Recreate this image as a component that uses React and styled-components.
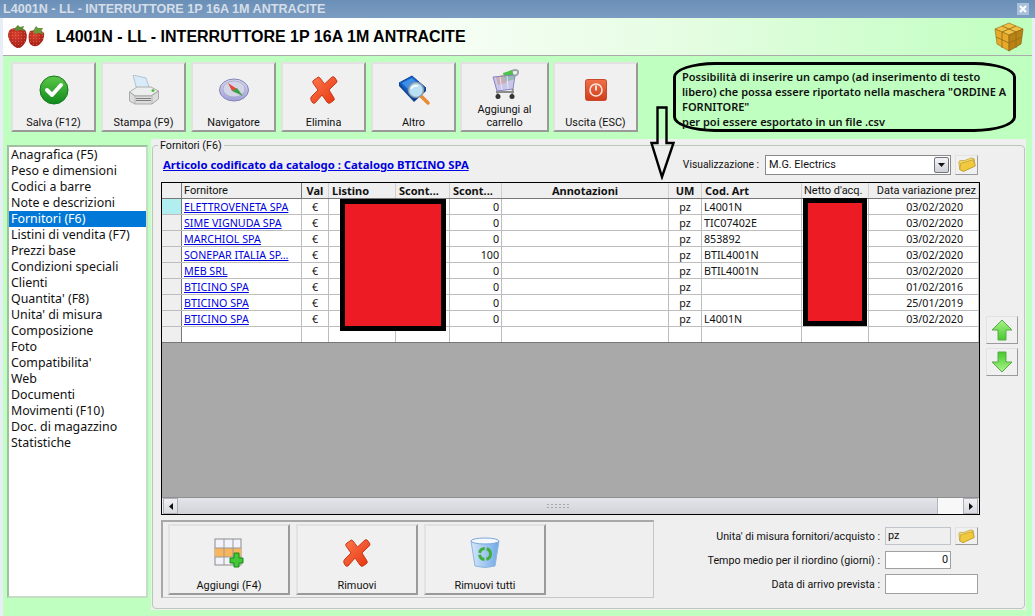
import React from "react";
import styled, { createGlobalStyle } from "styled-components";

const LIST_FONT = `"Noto Sans", "DejaVu Sans", sans-serif`;
const UI_FONT = `Roboto, "Noto Sans", sans-serif`;

const GlobalStyle = createGlobalStyle`
  html, body {
    margin: 0;
    padding: 0;
    background: #dfe9f3;
  }
  * {
    box-sizing: border-box;
  }
`;

const Frame = styled.div`
  position: relative;
  width: 1035px;
  height: 616px;
  overflow: hidden;
  padding: 0 3px;
  background: #e8eef5;
  font-family: ${UI_FONT};
  font-size: 10.9px;
  color: #111;
`;

const TitleBar = styled.div`
  display: flex;
  align-items: center;
  justify-content: space-between;
  height: 18px;
  margin: 0 -3px;
  padding: 0 6px 0 3px;
  background: linear-gradient(#6a8fb7, #7c9dc2);
  color: #d5dee8;
  font-family: "Liberation Sans", Arial, sans-serif;
  font-weight: bold;
  font-size: 12.6px;
`;

const CloseBox = styled.div`
  display: flex;
  align-items: center;
  justify-content: center;
  width: 12px;
  height: 12px;
  background: #a9c0da;
`;

const Header = styled.div`
  display: flex;
  align-items: center;
  height: 38px;
  padding: 0 8px 0 5px;
  background: linear-gradient(90deg, #fff 0%, #fff 30%, #e6fde3 65%, #bfffbf 100%);
  border-bottom: 1px solid #aaa;
`;

const HeaderTitle = styled.div`
  flex: 1;
  margin-left: 10px;
  font-family: "Liberation Sans", Arial, sans-serif;
  font-weight: bold;
  font-size: 16px;
  color: #000;
`;

const Content = styled.div`
  height: 560px;
  background: #bfffbf;
`;

const Toolbar = styled.div`
  display: flex;
  gap: 5px;
  height: 83px;
  padding: 6px 16px 0 8px;
`;

const ActionButton = styled.button`
  display: flex;
  flex-direction: column;
  flex: none;
  width: ${(p) => p.$w}px;
  height: ${(p) => p.$h || 70}px;
  margin: 0 0 0 ${(p) => (p.$tight ? -1 : 0)}px;
  padding: 0;
  background: #f0f0f0;
  border: 2px solid;
  border-color: #e2e2e2 #9a9a9a #9a9a9a #e2e2e2;
  font-family: ${UI_FONT};
  font-size: 10.9px;
  color: #111;
`;

const IconSlot = styled.span`
  flex: 1;
  display: flex;
  align-items: center;
  justify-content: center;
  min-height: 0;
`;

const ButtonLabel = styled.span`
  display: block;
  padding-bottom: 1px;
  line-height: 13px;
  text-align: center;
`;

const NoteBubble = styled.div`
  width: 343px;
  height: 70px;
  margin-left: auto;
  padding: 4px 0 0 6px;
  border: 3px solid #000;
  border-radius: 42px / 15px;
  font-family: ${LIST_FONT};
  font-weight: 600;
  font-size: 11px;
  line-height: 15px;
  color: #111;
  white-space: pre;
`;

const Body = styled.div`
  display: flex;
  gap: 3px;
  padding-left: 4px;
`;

const SideList = styled.ul`
  width: 141px;
  height: 453px;
  margin: 6px 0 0;
  padding: 0;
  list-style: none;
  background: #fff;
  border: 2px solid #a2bfa2;
  border-bottom-color: #c5dcc5;
  border-right-color: #c5dcc5;
  font-family: ${LIST_FONT};
  font-size: 12.4px;
`;

const SideItem = styled.li`
  height: 16px;
  padding-left: 2px;
  line-height: 16px;
  white-space: nowrap;
  background: ${(p) => (p.$active ? "#0078d7" : "transparent")};
  color: ${(p) => (p.$active ? "#fff" : "#111")};
`;

const Panel = styled.div`
  width: 875px;
  height: 471px;
  padding: 0 1px 1px;
  background: #efefef;
`;

const GroupBox = styled.fieldset`
  height: 470px;
  margin: 0;
  padding: 0 0 0 8px;
  border: 1px solid #b9c9b9;
  border-radius: 4px;
  min-width: 0;
`;

const GroupLegend = styled.legend`
  margin-left: -3px;
  padding: 0 2px;
  height: 13px;
  line-height: 13px;
  font-size: 10.7px;
`;

const TopRow = styled.div`
  display: flex;
  align-items: center;
  width: 817px;
  height: 30px;
  padding-bottom: 5px;
`;

const CatalogLink = styled.a`
  margin-left: 2px;
  font-family: ${LIST_FONT};
  color: #0000e0;
  font-weight: bold;
  font-size: 11.3px;
  text-decoration: underline;
`;

const ViewLabel = styled.span`
  margin-left: auto;
  margin-right: 6px;
  font-size: 10.3px;
`;

const Combo = styled.div`
  display: flex;
  align-items: center;
  justify-content: space-between;
  width: 186px;
  height: 20px;
  padding: 0 1px 0 3px;
  background: #fff;
  border: 1px solid #8a8a8a;
`;

const ComboArrow = styled.span`
  display: flex;
  align-items: center;
  justify-content: center;
  width: 15px;
  height: 16px;
  background: linear-gradient(#f4f4f8, #cfd0d8);
  border: 1px solid #70747c;
  border-radius: 2px;
`;

const FolderButton = styled.button`
  display: flex;
  align-items: center;
  justify-content: center;
  flex: none;
  width: 23px;
  height: ${(p) => p.$h || 20}px;
  margin: 0 0 0 4px;
  padding: 0;
  background: #f0f0f0;
  border: 1px solid;
  border-color: #e2e2e2 #9a9a9a #9a9a9a #e2e2e2;
`;

const MainRow = styled.div`
  display: flex;
  gap: 6px;
`;

const GridBox = styled.div`
  position: relative;
  display: flex;
  flex-direction: column;
  width: 819px;
  height: 333px;
  border: 1px solid #000;
  background: #a9a9a9;
  font-family: ${LIST_FONT};
  font-size: 10.7px;
`;

const COLUMNS = "20px 120px 27px 67px 54px 52px 167px 33px 100px 67px 110px";

const HeadRow = styled.div`
  display: grid;
  grid-template-columns: ${COLUMNS};
  height: 16px;
  background: #efefef;
  border-bottom: 1px solid #777;
`;

const HeadCell = styled.div`
  padding: 0 ${(p) => (p.$plain ? 2 : 3)}px;
  border-right: 1px solid ${(p) => (p.$dark ? "#777" : "#d0d0d0")};
  font-family: ${(p) => (p.$plain ? UI_FONT : LIST_FONT)};
  font-size: ${(p) => (p.$plain ? 11 : 11)}px;
  font-weight: ${(p) => (p.$plain ? "normal" : "bold")};
  text-align: ${(p) => p.$align || "left"};
  line-height: 15px;
  white-space: nowrap;
  overflow: hidden;
`;

const DataRow = styled.div`
  display: grid;
  grid-template-columns: ${COLUMNS};
  height: 16px;
  background: #fff;
  border-bottom: 1px solid ${(p) => (p.$last ? "#777" : "#bdbdbd")};
`;

const RowHead = styled.div`
  background: ${(p) => (p.$current ? "#b0eef0" : "#efefef")};
  border-right: 1px solid #777;
`;

const Cell = styled.div`
  padding: 0 ${(p) => p.$pr || 2}px 0 2px;
  border-right: 1px solid #bdbdbd;
  text-align: ${(p) => p.$align || "left"};
  line-height: 16px;
  white-space: nowrap;
  overflow: hidden;
`;

const SupplierLink = styled.a`
  color: #0000e0;
  text-decoration: underline;
`;

const GreyArea = styled.div`
  flex: 1;
  background: #a9a9a9;
`;

const Redaction = styled.div`
  position: absolute;
  left: ${(p) => p.$left}px;
  top: ${(p) => p.$top}px;
  width: ${(p) => p.$w}px;
  height: ${(p) => p.$h}px;
  background: #ed1c24;
  border: 5px solid #000;
`;

const ScrollBar = styled.div`
  display: flex;
  height: 17px;
  padding: 0 1px;
  background: #f0f0f0;
  border-top: 1px solid #8f8f8f;
`;

const ScrollButton = styled.div`
  display: flex;
  align-items: center;
  justify-content: center;
  flex: none;
  width: 15px;
  background: linear-gradient(#f0f0f4, #dadbe2);
  border: 1px solid #aeb0b8;
`;

const ScrollThumb = styled.div`
  flex: 1;
  display: flex;
  align-items: center;
  justify-content: center;
  background: linear-gradient(#e4e5ea, #d2d3da);
  border-right: 1px solid #b4b5bc;
`;

const ScrollGrip = styled.span`
  width: 23px;
  height: 6px;
  background-image: radial-gradient(#a5a6ae 0.8px, transparent 1px);
  background-size: 4px 3px;
`;

const ScrollRest = styled.div`
  width: 25px;
  background: #f8f8f8;
`;

const SideColumn = styled.div`
  display: flex;
  flex-direction: column;
  gap: 4px;
  padding-top: 134px;
`;

const MoveButton = styled.button`
  display: flex;
  align-items: center;
  justify-content: center;
  width: 32px;
  height: 28px;
  padding: 0;
  background: #f0f0f0;
  border: 1px solid;
  border-color: #e2e2e2 #9a9a9a #9a9a9a #e2e2e2;
`;

const BottomRow = styled.div`
  display: flex;
  width: 817px;
  margin-top: 5px;
`;

const ButtonGroup = styled.div`
  display: flex;
  gap: 6px;
  width: 493px;
  height: 78px;
  padding: 2px 0 0 5px;
  border: 1px solid #c6c6c6;
  border-top: 2px solid #a8a8a8;
  border-left: 2px solid #a8a8a8;
`;

const FieldBlock = styled.div`
  flex: 1;
  display: flex;
  flex-direction: column;
  padding-top: 7px;
`;

const FieldRow = styled.div`
  display: grid;
  grid-template-columns: 1fr 93px;
  align-items: center;
  gap: 5px;
  height: ${(p) => p.$h}px;
  margin-bottom: ${(p) => p.$mb || 0}px;
`;

const FieldLabel = styled.label`
  font-size: 10.7px;
  text-align: right;
  white-space: nowrap;
`;

const FieldControl = styled.div`
  display: flex;
`;

const TextBox = styled.div`
  width: ${(p) => p.$w}px;
  height: ${(p) => p.$h}px;
  padding: 0 2px;
  background: ${(p) => (p.$readOnly ? "#efefef" : "#fff")};
  border: 1px solid ${(p) => (p.$readOnly ? "#c0c4cc" : "#a0a0a0")};
  line-height: ${(p) => p.$h - 2}px;
  text-align: ${(p) => p.$align || "left"};
`;

const ArrowNote = styled.svg`
  position: absolute;
  left: 650px;
  top: 106px;
`;

/* icons */
const CheckIcon = () => (
  <svg width="30" height="30" viewBox="0 0 30 30">
    <defs>
      <linearGradient id="chk" x1="0" y1="0" x2="0" y2="1">
        <stop offset="0" stopColor="#5cc84a" />
        <stop offset="1" stopColor="#0e8a1a" />
      </linearGradient>
    </defs>
    <circle cx="15" cy="15" r="14" fill="url(#chk)" stroke="#16791e" />
    <path d="M8 15 L13 20 L22 10" fill="none" stroke="#fff" strokeWidth="4" strokeLinecap="round" strokeLinejoin="round" />
  </svg>
);

const PrinterIcon = () => (
  <svg width="30" height="30" viewBox="0 0 30 30">
    <path d="M4 0 L17 3 L21 15 L8 15 Z" fill="#d9ebf9" stroke="#a4b8c8" strokeWidth="0.8" />
    <path d="M0.5 17 L8 12 H22 L29.5 16 L22 21 H6 Z" fill="#eceded" stroke="#a0a0a0" strokeWidth="0.8" />
    <path d="M0.5 17 L6 21 H22 L29.5 16 V24 L23 29 H6 L0.5 26 Z" fill="#dcdcdc" stroke="#9a9a9a" strokeWidth="0.8" />
    <path d="M6 21 V29 M23 21 V29" stroke="#a8a8a8" strokeWidth="0.7" />
    <path d="M7 23.5 H22 M7 25.5 H22" stroke="#7d7d7d" />
    <circle cx="24" cy="15.5" r="1.5" fill="#55c23c" />
  </svg>
);

const CompassIcon = () => (
  <svg width="30" height="24" viewBox="0 0 30 24">
    <defs>
      <linearGradient id="cmp" x1="0" y1="0" x2="0" y2="1">
        <stop offset="0" stopColor="#d8d8f0" />
        <stop offset="1" stopColor="#a0a0d8" />
      </linearGradient>
    </defs>
    <ellipse cx="15" cy="12" rx="14.5" ry="11" fill="url(#cmp)" stroke="#8484b4" />
    <ellipse cx="15" cy="11" rx="11" ry="8" fill="#d3d6e6" stroke="#9a9ac0" strokeWidth="0.6" />
    <path d="M9 5 L18 11 L13 13 Z" fill="#e2483c" />
    <path d="M13 13 L18 10 L24 18 Z" fill="#3d9e46" />
  </svg>
);

const CrossIcon = () => (
  <svg width="30" height="30" viewBox="0 0 30 30">
    <defs>
      <linearGradient id="crs" x1="0" y1="0" x2="1" y2="1">
        <stop offset="0" stopColor="#ff7a4e" />
        <stop offset="1" stopColor="#e4340f" />
      </linearGradient>
    </defs>
    <path
      d="M8 3 Q9 1 11 3 L15.5 9 L23 2 Q25 1 26 3 L28 6 Q28 8 26 9 L20 15 L25 23 Q26 25 24 26 L21 28 Q19 29 18 27 L13 20 L6 28 Q4 29 3 27 L2 25 Q1 23 3 21 L9 15 L4 8 Q3 6 5 5 Z"
      fill="url(#crs)"
      stroke="#c8381a"
    />
  </svg>
);

const BookIcon = () => (
  <svg width="32" height="30" viewBox="0 0 32 30">
    <path d="M1 8 L14 1 L28 13 L16 24 Z" fill="#1565c8" stroke="#0d479b" />
    <path d="M4 8 L14 3 L25 13 L16 20 Z" fill="#3f8ee8" />
    <path d="M1 8 L16 24 L16 27 L1 11 Z" fill="#0d479b" />
    <path d="M16 27 L28 16 L28 13 L16 24 Z" fill="#0b3c86" />
    <path d="M23 21 L30 28" stroke="#e98a35" strokeWidth="3.5" strokeLinecap="round" />
    <circle cx="18" cy="15" r="7.5" fill="#b9e0f4" stroke="#8a9aaa" strokeWidth="1.5" />
    <path d="M13 14 Q15 10 20 11" fill="none" stroke="#fff" strokeWidth="1.4" />
  </svg>
);

const CartIcon = () => (
  <svg width="28" height="32" viewBox="0 0 28 32">
    <path d="M17 6 Q23 0 27 3 Q28 6 24 8" fill="none" stroke="#a0a4a8" strokeWidth="1.8" />
    <path d="M12 5 L21 2 L24 11 L14 14 Z" fill="#4fc04a" />
    <path d="M5 9 L12 7 L15 15 L7 17 Z" fill="#ee9a48" />
    <path d="M2 9 L24 7 L22 21 L6 23 Z" fill="#b9b4e6" fillOpacity="0.7" stroke="#8585c0" />
    <path d="M9 9 L11 22 M16 8 L17 21" stroke="#e4e4f4" />
    <path d="M5 24 H23 M6 23 L7 27 M22 21 L21 27" stroke="#8c8c8c" strokeWidth="1.8" />
    <circle cx="7" cy="28.5" r="2.5" fill="#333" />
    <circle cx="21" cy="28.5" r="2.5" fill="#333" />
  </svg>
);

const PowerIcon = () => (
  <svg width="22" height="22" viewBox="0 0 22 22">
    <defs>
      <linearGradient id="pwr" x1="0" y1="0" x2="0" y2="1">
        <stop offset="0" stopColor="#f07048" />
        <stop offset="1" stopColor="#cf3e1b" />
      </linearGradient>
    </defs>
    <rect x="0.5" y="0.5" width="21" height="21" rx="2" fill="url(#pwr)" stroke="#c9492a" />
    <circle cx="11" cy="11" r="6" fill="none" stroke="#fbe4dc" strokeWidth="1.6" />
    <path d="M11 6.5 V11.5" stroke="#fff" strokeWidth="1.6" />
  </svg>
);

const BoxIcon = () => (
  <svg width="30" height="30" viewBox="0 0 30 30">
    <path d="M1 7 L15 1 L29 7 L15 13 Z" fill="#f0bf45" stroke="#9c7418" strokeWidth="0.7" />
    <path d="M1 7 L15 13 V29 L3 22 Z" fill="#e6a92a" stroke="#9c7418" strokeWidth="0.7" />
    <path d="M29 7 L15 13 V29 L27 22 Z" fill="#b98314" stroke="#8a6414" strokeWidth="0.7" />
    <path d="M8 4 L22 10 V26 M22 4 L8 10 V26 M2 15 L15 21 L28 15" fill="none" stroke="#96701c" strokeWidth="0.9" />
  </svg>
);

const StrawberryIcon = () => (
  <svg width="38" height="24" viewBox="0 0 38 24">
    <defs>
      <radialGradient id="sbr" cx="0.4" cy="0.35" r="0.8">
        <stop offset="0" stopColor="#dc4030" />
        <stop offset="1" stopColor="#94170f" />
      </radialGradient>
      <pattern id="seed" width="3" height="3" patternUnits="userSpaceOnUse">
        <circle cx="1.5" cy="1.5" r="0.5" fill="#f0a070" fillOpacity="0.6" />
      </pattern>
    </defs>
    <path d="M22 6 Q32 3 36 8 Q37 15 31 20 Q26 23 22 19 Q19 12 22 6 Z" fill="url(#sbr)" />
    <path d="M22 6 Q32 3 36 8 Q37 15 31 20 Q26 23 22 19 Q19 12 22 6 Z" fill="url(#seed)" />
    <path d="M3 4 Q12 1 17 5 Q20 9 18 16 Q14 24 9 23 Q2 20 0 11 Q0 6 3 4 Z" fill="url(#sbr)" />
    <path d="M3 4 Q12 1 17 5 Q20 9 18 16 Q14 24 9 23 Q2 20 0 11 Q0 6 3 4 Z" fill="url(#seed)" />
    <path d="M6 4 L10 0 L12 2 L16 1 L15 4 L18 6 L12 5 L8 6 Z" fill="#5b8e36" />
    <path d="M25 6 L28 1 L30 3 L35 3 L33 7 L37 10 L31 8 L27 9 Z" fill="#6a9a3e" />
  </svg>
);

const FolderIcon = ({ size = 18 }) => (
  <svg width={size} height={size * 0.85} viewBox="0 0 20 17">
    <path d="M1 6 L2 4 H7 L15 1 L18 2 L19 10 L6 16 L2 14 Z" fill="#f6dc70" stroke="#b99a30" strokeWidth="0.8" />
    <path d="M3 7 L17 3 L19 10 L6 16 L2 14 Z" fill="#f2c93e" stroke="#b99a30" strokeWidth="0.8" />
  </svg>
);

const MoveArrow = ({ down }) => (
  <svg width="22" height="22" viewBox="0 0 22 22" style={{ transform: down ? "rotate(180deg)" : undefined }}>
    <defs>
      <linearGradient id="arw" x1="0" y1="0" x2="0" y2="1">
        <stop offset="0" stopColor="#a9f58a" />
        <stop offset="1" stopColor="#46c92c" />
      </linearGradient>
    </defs>
    <path d="M11 1 L21 11 H15 V21 H7 V11 H1 Z" fill="url(#arw)" stroke="#5ba84a" />
  </svg>
);

const AddGridIcon = () => (
  <svg width="30" height="30" viewBox="0 0 30 30">
    <rect x="1" y="1" width="26" height="26" fill="#f2f2fa" stroke="#8c8c8c" />
    <rect x="1" y="10" width="26" height="9" fill="#f8b55c" />
    <path d="M10 1 V27 M19 1 V27 M1 10 H27 M1 19 H27" stroke="#9a9a9a" />
    <path d="M20 15 H25 V20 H29 V25 H25 V29 H20 V25 H16 V20 H20 Z" fill="#45c835" stroke="#168a1a" />
  </svg>
);

const BinIcon = () => (
  <svg width="30" height="32" viewBox="0 0 30 32">
    <defs>
      <linearGradient id="bin" x1="0" y1="0" x2="1" y2="0">
        <stop offset="0" stopColor="#d4e8fb" />
        <stop offset="1" stopColor="#6fa8e4" />
      </linearGradient>
    </defs>
    <path d="M1 4 L5 29 Q15 32 25 29 L29 4 Z" fill="url(#bin)" stroke="#8db6e0" />
    <ellipse cx="15" cy="4" rx="14" ry="3" fill="#f4f8fc" stroke="#7da8d8" />
    <circle cx="15" cy="17" r="5.5" fill="none" stroke="#3fae3a" strokeWidth="3" strokeDasharray="7 2" />
  </svg>
);

const suppliers = [
  { name: "ELETTROVENETA SPA", s2: "0", code: "L4001N", date: "03/02/2020" },
  { name: "SIME VIGNUDA SPA", s2: "0", code: "TIC07402E", date: "03/02/2020" },
  { name: "MARCHIOL SPA", s2: "0", code: "853892", date: "03/02/2020" },
  { name: "SONEPAR ITALIA SP...", s2: "100", code: "BTIL4001N", date: "03/02/2020" },
  { name: "MEB SRL", s2: "0", code: "BTIL4001N", date: "03/02/2020" },
  { name: "BTICINO SPA", s2: "0", code: "", date: "01/02/2016" },
  { name: "BTICINO SPA", s2: "0", code: "", date: "25/01/2019" },
  { name: "BTICINO SPA", s2: "0", code: "L4001N", date: "03/02/2020" },
];

const menu = [
  "Anagrafica (F5)",
  "Peso e dimensioni",
  "Codici a barre",
  "Note e descrizioni",
  "Fornitori (F6)",
  "Listini di vendita (F7)",
  "Prezzi base",
  "Condizioni speciali",
  "Clienti",
  "Quantita' (F8)",
  "Unita' di misura",
  "Composizione",
  "Foto",
  "Compatibilita'",
  "Web",
  "Documenti",
  "Movimenti (F10)",
  "Doc. di magazzino",
  "Statistiche",
];

const Action = ({ w, h, tight, icon, children }) => (
  <ActionButton $w={w} $h={h} $tight={tight}>
    <IconSlot>{icon}</IconSlot>
    <ButtonLabel>{children}</ButtonLabel>
  </ActionButton>
);

const App = () => {
  return (
    <Frame>
      <GlobalStyle />
      <TitleBar>
        <span>L4001N - LL - INTERRUTTORE 1P 16A 1M ANTRACITE</span>
        <CloseBox>
          <svg width="8" height="8" viewBox="0 0 8 8">
            <path d="M1 1 L7 7 M7 1 L1 7" stroke="#fff" strokeWidth="2" />
          </svg>
        </CloseBox>
      </TitleBar>
      <Header>
        <StrawberryIcon />
        <HeaderTitle>L4001N - LL - INTERRUTTORE 1P 16A 1M ANTRACITE</HeaderTitle>
        <BoxIcon />
      </Header>
      <Content>
        <Toolbar>
          <Action w={85} icon={<CheckIcon />}>Salva (F12)</Action>
          <Action w={85} icon={<PrinterIcon />}>Stampa (F9)</Action>
          <Action w={85} icon={<CompassIcon />}>Navigatore</Action>
          <Action w={85} icon={<CrossIcon />}>Elimina</Action>
          <Action w={85} icon={<BookIcon />}>Altro</Action>
          <Action w={89} tight icon={<CartIcon />}>
            Aggiungi al
            <br />
            carrello
          </Action>
          <Action w={85} tight icon={<PowerIcon />}>Uscita (ESC)</Action>
          <NoteBubble>
            {`Possibilità di inserire un campo (ad inserimento di testo
libero) che possa essere riportato nella maschera "ORDINE A
FORNITORE"
per poi essere esportato in un file .csv`}
          </NoteBubble>
        </Toolbar>
        <Body>
          <SideList>
            {menu.map((item) => (
              <SideItem key={item} $active={item === "Fornitori (F6)"}>
                {item}
              </SideItem>
            ))}
          </SideList>
          <Panel>
            <GroupBox>
              <GroupLegend>Fornitori (F6)</GroupLegend>
              <TopRow>
                <CatalogLink>Articolo codificato da catalogo : Catalogo BTICINO SPA</CatalogLink>
                <ViewLabel>Visualizzazione :</ViewLabel>
                <Combo>
                  M.G. Electrics
                  <ComboArrow>
                    <svg width="7" height="4" viewBox="0 0 7 4">
                      <path d="M0 0 H7 L3.5 4 Z" fill="#111" />
                    </svg>
                  </ComboArrow>
                </Combo>
                <FolderButton>
                  <FolderIcon />
                </FolderButton>
              </TopRow>
              <MainRow>
                <GridBox>
                  <HeadRow>
                    <HeadCell $dark />
                    <HeadCell $plain $dark>Fornitore</HeadCell>
                    <HeadCell $align="center">Val</HeadCell>
                    <HeadCell>Listino</HeadCell>
                    <HeadCell>Scont...</HeadCell>
                    <HeadCell>Scont...</HeadCell>
                    <HeadCell $align="center">Annotazioni</HeadCell>
                    <HeadCell $align="center">UM</HeadCell>
                    <HeadCell>Cod. Art</HeadCell>
                    <HeadCell $plain>Netto d'acq.</HeadCell>
                    <HeadCell $plain $align="right">Data variazione prez</HeadCell>
                  </HeadRow>
                  {suppliers.map((s, i) => (
                    <DataRow key={i}>
                      <RowHead $current={i === 0} />
                      <Cell><SupplierLink>{s.name}</SupplierLink></Cell>
                      <Cell $align="center">€</Cell>
                      <Cell />
                      <Cell />
                      <Cell $align="right">{s.s2}</Cell>
                      <Cell />
                      <Cell $align="center">pz</Cell>
                      <Cell>{s.code}</Cell>
                      <Cell />
                      <Cell $align="right" $pr={15}>{s.date}</Cell>
                    </DataRow>
                  ))}
                  <DataRow $last>
                    <RowHead />
                    <Cell />
                    <Cell />
                    <Cell />
                    <Cell />
                    <Cell />
                    <Cell />
                    <Cell />
                    <Cell />
                    <Cell />
                    <Cell />
                  </DataRow>
                  <GreyArea />
                  <ScrollBar>
                    <ScrollButton>
                      <svg width="4" height="7" viewBox="0 0 4 7">
                        <path d="M4 0 V7 L0 3.5 Z" fill="#111" />
                      </svg>
                    </ScrollButton>
                    <ScrollThumb>
                      <ScrollGrip />
                    </ScrollThumb>
                    <ScrollRest />
                    <ScrollButton>
                      <svg width="4" height="7" viewBox="0 0 4 7">
                        <path d="M0 0 V7 L4 3.5 Z" fill="#111" />
                      </svg>
                    </ScrollButton>
                  </ScrollBar>
                  <Redaction $left={178} $top={16} $w={106} $h={132} />
                  <Redaction $left={641} $top={15} $w={64} $h={128} />
                </GridBox>
                <SideColumn>
                  <MoveButton><MoveArrow /></MoveButton>
                  <MoveButton><MoveArrow down /></MoveButton>
                </SideColumn>
              </MainRow>
              <BottomRow>
                <ButtonGroup>
                  <Action w={122} h={71} icon={<AddGridIcon />}>Aggiungi (F4)</Action>
                  <Action w={122} h={71} icon={<CrossIcon />}>Rimuovi</Action>
                  <Action w={122} h={71} icon={<BinIcon />}>Rimuovi tutti</Action>
                </ButtonGroup>
                <FieldBlock>
                  <FieldRow $h={18} $mb={6}>
                    <FieldLabel>Unita' di misura fornitori/acquisto :</FieldLabel>
                    <FieldControl>
                      <TextBox $w={66} $h={18} $readOnly>pz</TextBox>
                      <FolderButton $h={18}>
                        <FolderIcon size={17} />
                      </FolderButton>
                    </FieldControl>
                  </FieldRow>
                  <FieldRow $h={18} $mb={5}>
                    <FieldLabel>Tempo medio per il riordino (giorni) :</FieldLabel>
                    <FieldControl>
                      <TextBox $w={66} $h={18} $align="right">0</TextBox>
                    </FieldControl>
                  </FieldRow>
                  <FieldRow $h={20}>
                    <FieldLabel>Data di arrivo prevista :</FieldLabel>
                    <FieldControl>
                      <TextBox $w={93} $h={20} />
                    </FieldControl>
                  </FieldRow>
                </FieldBlock>
              </BottomRow>
            </GroupBox>
          </Panel>
        </Body>
      </Content>
      <ArrowNote width="26" height="74" viewBox="0 0 26 74">
        <path d="M7.5 1.5 H16.5 V37 H23.5 L12 71 L1.5 37 H7.5 Z" fill="none" stroke="#000" strokeWidth="2.4" />
      </ArrowNote>
    </Frame>
  );
};

export default App;
